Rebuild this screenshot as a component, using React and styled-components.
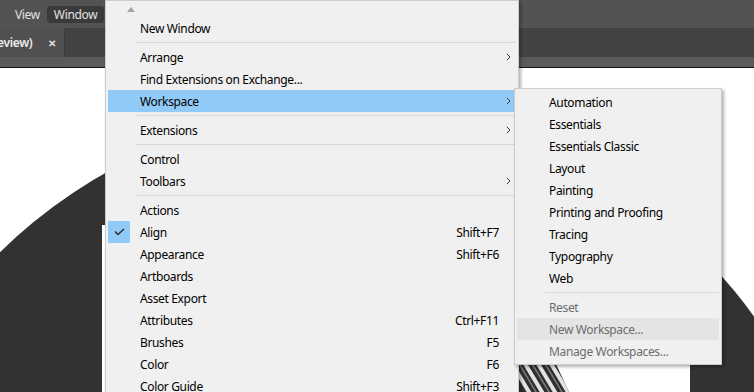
import React from "react";
import styled, { createGlobalStyle } from "styled-components";

const Global = createGlobalStyle`
  * { box-sizing: border-box; }
  body {
    margin: 0;
    background: #535353;
    font-family: "Segoe UI", "Noto Sans", sans-serif;
  }
`;

const Screen = styled.div`
  position: relative;
  width: 754px;
  height: 392px;
  overflow: hidden;
  display: flex;
  flex-direction: column;
  font-size: 12px;
  letter-spacing: -0.35px;
`;

const MenuBar = styled.div`
  height: 28px;
  flex: none;
  background: #535353;
  display: flex;
  align-items: center;
  padding-left: 8px;
`;

const BarItem = styled.div`
  height: 17px;
  display: flex;
  align-items: center;
  padding: 0 7px;
  border-radius: 3px;
  color: #e2e2e2;
  background: ${(p) => (p.$active ? "#3a3a3a" : "transparent")};
`;

const TabBar = styled.div`
  height: 29px;
  flex: none;
  background: #434343;
  display: flex;
`;

const Tab = styled.div`
  width: 65px;
  display: flex;
  align-items: center;
  justify-content: flex-end;
  gap: 16px;
  padding-right: 8px;
  overflow: hidden;
  white-space: nowrap;
  background: #505050;
  border-right: 1px solid #3c3c3c;
  color: #ececec;
  font-weight: 600;
`;

const Close = styled.span`
  font-size: 10px;
  font-weight: 700;
  color: #e0e0e0;
`;

const Strip = styled.div`
  height: 11px;
  flex: none;
  background: #5a5a5a;
  border-bottom: 1px solid #141414;
`;

const Canvas = styled.div`
  flex: 1;
  background: #ffffff;
  svg { display: block; }
`;

const Menu = styled.div`
  position: absolute;
  left: ${(p) => p.$left}px;
  top: ${(p) => p.$top}px;
  width: ${(p) => p.$width}px;
  background: #f0f0f0;
  border: 1px solid #cbcbcb;
  padding: 2px;
  box-shadow: 2px 2px 3px rgba(0, 0, 0, 0.3);
`;

const ScrollUp = styled.div`
  height: 16px;
  margin-top: -2px;
  display: flex;
  align-items: center;
  padding-left: 19px;
  &::before {
    content: "";
    border-left: 4.5px solid transparent;
    border-right: 4.5px solid transparent;
    border-bottom: 5px solid #a3a3a3;
  }
`;

const Item = styled.div`
  height: 22px;
  display: grid;
  grid-template-columns: 22px 1fr auto 17px;
  align-items: center;
  color: ${(p) => (p.$disabled ? "#6d6d6d" : "#000")};
  background: ${(p) =>
    p.$selected ? "#91c9f7" : p.$hover ? "#e4e4e4" : "transparent"};
  white-space: nowrap;
`;

const Check = styled.div`
  height: 22px;
  display: flex;
  align-items: center;
  justify-content: center;
  background: ${(p) => (p.$on ? "#91c9f7" : "transparent")};
`;

const Label = styled.span`
  padding-left: 10px;
`;

const Shortcut = styled.span`
  text-align: right;
`;

const Arrow = styled.div`
  display: flex;
  justify-content: center;
  padding-left: 2px;
`;

const Separator = styled.div`
  height: 7px;
  display: flex;
  align-items: center;
  padding-left: 28px;
  &::after {
    content: "";
    flex: 1;
    height: 1px;
    background: #d7d7d7;
  }
`;

const CheckIcon = () => (
  <svg width="11" height="8" viewBox="0 0 11 8">
    <polyline points="1,3.5 4,6.5 10,1" fill="none" stroke="#2b2b2b" strokeWidth="1.4" />
  </svg>
);

const Chevron = () => (
  <svg width="5" height="8" viewBox="0 0 5 8">
    <polyline points="0.8,0.8 4,4 0.8,7.2" fill="none" stroke="#3c3c3c" strokeWidth="1" />
  </svg>
);

const windowMenu = [
  { label: "New Window" },
  "sep",
  { label: "Arrange", sub: true },
  { label: "Find Extensions on Exchange..." },
  { label: "Workspace", sub: true, selected: true },
  "sep",
  { label: "Extensions", sub: true },
  "sep",
  { label: "Control" },
  { label: "Toolbars", sub: true },
  "sep",
  { label: "Actions" },
  { label: "Align", checked: true, key: "Shift+F7" },
  { label: "Appearance", key: "Shift+F6" },
  { label: "Artboards" },
  { label: "Asset Export" },
  { label: "Attributes", key: "Ctrl+F11" },
  { label: "Brushes", key: "F5" },
  { label: "Color", key: "F6" },
  { label: "Color Guide", key: "Shift+F3" },
];

const workspaceMenu = [
  { label: "Automation" },
  { label: "Essentials" },
  { label: "Essentials Classic" },
  { label: "Layout" },
  { label: "Painting" },
  { label: "Printing and Proofing" },
  { label: "Tracing" },
  { label: "Typography" },
  { label: "Web" },
  "sep",
  { label: "Reset", disabled: true },
  { label: "New Workspace...", disabled: true, hover: true },
  { label: "Manage Workspaces...", disabled: true },
];

const MenuItems = ({ items }) =>
  items.map((it, i) =>
    it === "sep" ? (
      <Separator key={i} />
    ) : (
      <Item key={i} $selected={it.selected} $hover={it.hover} $disabled={it.disabled}>
        <Check $on={it.checked}>{it.checked && <CheckIcon />}</Check>
        <Label>{it.label}</Label>
        <Shortcut>{it.key}</Shortcut>
        <Arrow>{it.sub && <Chevron />}</Arrow>
      </Item>
    )
  );

// artwork on the artboard: a big dark disc with a placed image over it
const Artwork = () => (
  <svg width="754" height="324" viewBox="0 0 754 324">
    <defs>
      <clipPath id="photo">
        <polygon points="518,296 556,296 569,324 518,324" />
      </clipPath>
    </defs>
    <circle cx="349.5" cy="539" r="498" fill="#323232" />
    <rect x="102" y="157" width="588" height="167" fill="#ffffff" />
    <g clipPath="url(#photo)">
      <rect x="518" y="296" width="52" height="28" fill="#2f2f2f" />
      {[0, 13, 26, 39].map((o) => (
        <line key={o} x1={505 + o} y1="284" x2={535 + o} y2="334" stroke="#e2e2e2" strokeWidth="4" />
      ))}
      {[7, 20, 33].map((o) => (
        <line key={o} x1={505 + o} y1="284" x2={535 + o} y2="334" stroke="#7c7c7c" strokeWidth="1.5" />
      ))}
    </g>
  </svg>
);

export default function App() {
  return (
    <>
      <Global />
      <Screen>
        <MenuBar>
          <BarItem>View</BarItem>
          <BarItem $active>Window</BarItem>
        </MenuBar>
        <TabBar>
          <Tab>
            <span>Untitled-1 @ 50% (RGB/Preview)</span>
            <Close>✕</Close>
          </Tab>
        </TabBar>
        <Strip />
        <Canvas>
          <Artwork />
        </Canvas>
        <Menu $left={105} $top={0} $width={414}>
          <ScrollUp />
          <MenuItems items={windowMenu} />
        </Menu>
        <Menu $left={514} $top={88} $width={208}>
          <MenuItems items={workspaceMenu} />
        </Menu>
      </Screen>
    </>
  );
}
